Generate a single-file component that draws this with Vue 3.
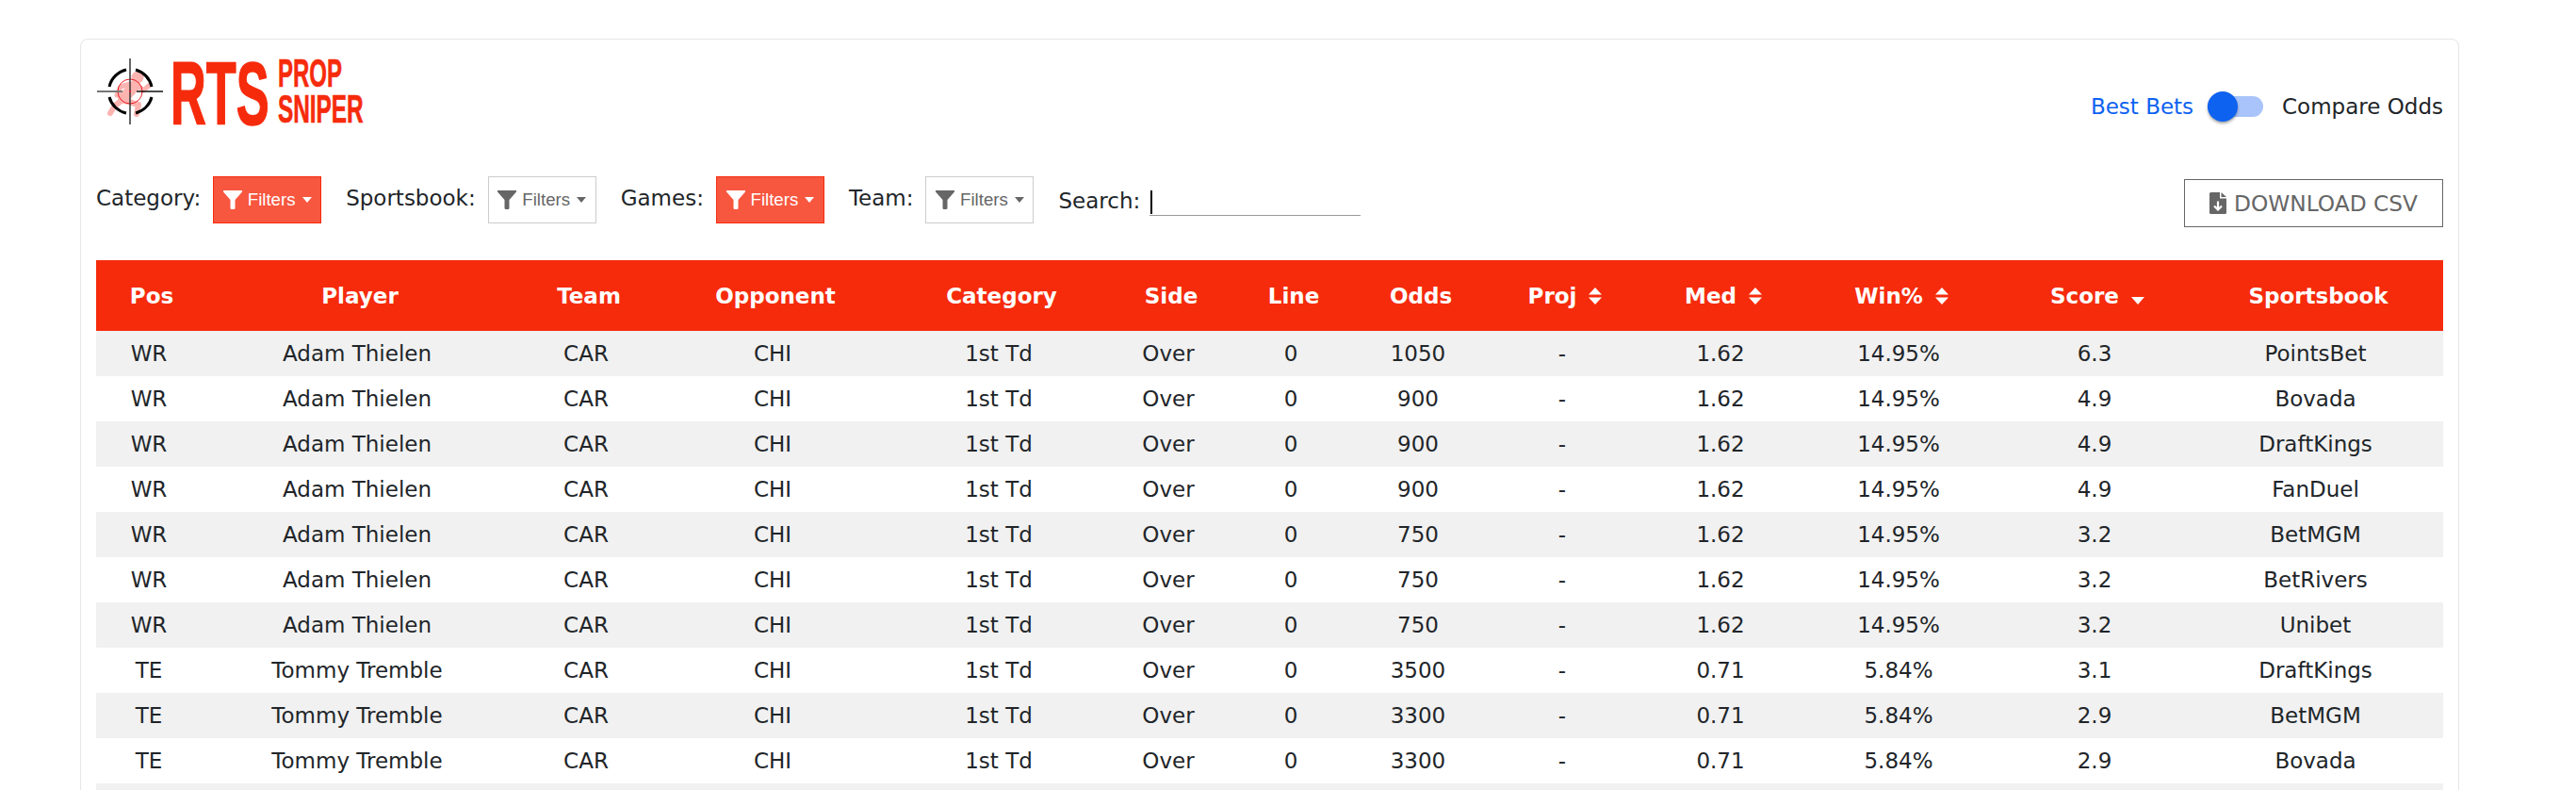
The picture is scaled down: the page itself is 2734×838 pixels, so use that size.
<script setup>
const columns = [
  { label: 'Pos', width: 112 },
  { label: 'Player', width: 330 },
  { label: 'Team', width: 156 },
  { label: 'Opponent', width: 240 },
  { label: 'Category', width: 240 },
  { label: 'Side', width: 120 },
  { label: 'Line', width: 140 },
  { label: 'Odds', width: 130 },
  { label: 'Proj', width: 176, sort: 'both' },
  { label: 'Med', width: 160, sort: 'both' },
  { label: 'Win%', width: 218, sort: 'both' },
  { label: 'Score', width: 198, sort: 'down' },
  { label: 'Sportsbook', width: 271 },
]
const adam = ['WR', 'Adam Thielen', '1.62', '14.95%']
const tommy = ['TE', 'Tommy Tremble', '0.71', '5.84%']
const row = (p, odds, score, book) => [p[0], p[1], 'CAR', 'CHI', '1st Td', 'Over', '0', odds, '-', p[2], p[3], score, book]
const rows = [
  row(adam, '1050', '6.3', 'PointsBet'),
  row(adam, '900', '4.9', 'Bovada'),
  row(adam, '900', '4.9', 'DraftKings'),
  row(adam, '900', '4.9', 'FanDuel'),
  row(adam, '750', '3.2', 'BetMGM'),
  row(adam, '750', '3.2', 'BetRivers'),
  row(adam, '750', '3.2', 'Unibet'),
  row(tommy, '3500', '3.1', 'DraftKings'),
  row(tommy, '3300', '2.9', 'BetMGM'),
  row(tommy, '3300', '2.9', 'Bovada'),
  row(tommy, '3300', '2.9', 'FanDuel'),
]
const filters = [
  { label: 'Category:', active: true },
  { label: 'Sportsbook:', active: false },
  { label: 'Games:', active: true },
  { label: 'Team:', active: false },
]
</script>

<template>
  <div class="page">
    <section class="card">
      <header class="top">
        <div class="logo">
          <svg class="reticle" width="72" height="76" viewBox="0 1 72 76" aria-hidden="true">
            <g fill="none" stroke="#fbb4b0" stroke-linecap="round" stroke-linejoin="round">
              <circle cx="44" cy="23" r="6.5" fill="#fbb4b0" stroke="none" />
              <path d="M41 32 L29 45" stroke-width="12" />
              <path d="M28 47 L20 53 L15 61" stroke-width="6" />
              <path d="M31 48 L45 52 L43 62" stroke-width="6" />
              <path d="M44 31 L50 37 L57 31" stroke-width="5" />
              <path d="M36 30 L26 33 L22 42" stroke-width="5" />
            </g>
            <g fill="none" stroke="#000" stroke-width="3">
              <path d="M14 33 A24 24 0 0 1 32 15" />
              <path d="M42 15 A24 24 0 0 1 59 33" />
              <path d="M59 44 A24 24 0 0 1 42 61" />
              <path d="M32 61 A24 24 0 0 1 14 44" />
            </g>
            <circle cx="36" cy="38" r="13" fill="none" stroke="#ee1c25" stroke-width="1" />
            <path d="M36 3 V73" stroke="#333" stroke-width="1.5" />
            <path d="M1 38 H28" stroke="#777" stroke-width="2" />
            <path d="M43 38 H71" stroke="#111" stroke-width="1.5" />
            <circle cx="36" cy="38" r="1" fill="#ee1c25" />
          </svg>
          <div class="rts"><span>RTS</span></div>
          <div class="word-stack">
            <div class="word"><span class="prop">PROP</span></div>
            <div class="word"><span class="sniper">SNIPER</span></div>
          </div>
        </div>
        <div class="toggle-group">
          <span class="best">Best Bets</span>
          <span class="switch"><span class="thumb"></span></span>
          <span class="compare">Compare Odds</span>
        </div>
      </header>

      <div class="toolbar">
        <div class="filter-list">
          <div v-for="f in filters" :key="f.label" class="filter">
            <span class="filter-label">{{ f.label }}</span>
            <button type="button" class="filter-btn" :class="{ active: f.active }">
              <svg class="funnel" width="20" height="20" viewBox="0 0 20 20">
                <path d="M0 0 H20 V1.5 L12.5 10 V19 Q12.5 20 11 20 H9 Q7.5 20 7.5 19 V10 L0 1.5 Z" fill="currentColor" />
              </svg>
              <span class="filter-text">Filters</span>
              <span class="caret"></span>
            </button>
          </div>
          <div class="search">
            <span class="search-label">Search:</span>
            <span class="search-input"><span class="cursor"></span></span>
          </div>
        </div>
        <button type="button" class="download">
          <svg width="18" height="23" viewBox="0 0 18 23">
            <path d="M1.5 0 H11 V6.5 H18 V21.5 Q18 23 16.5 23 H1.5 Q0 23 0 21.5 V1.5 Q0 0 1.5 0 Z M12.5 0 L18 5 H12.5 Z" fill="#666" />
            <path d="M9 9.5 V18 M5 14.5 L9 18.5 L13 14.5" fill="none" stroke="#fff" stroke-width="2.2" />
          </svg>
          <span>DOWNLOAD CSV</span>
        </button>
      </div>

      <table class="grid">
        <colgroup>
          <col v-for="c in columns" :key="c.label" :style="{ width: c.width + 'px' }" />
        </colgroup>
        <thead>
          <tr>
            <th v-for="c in columns" :key="c.label">
              {{ c.label }}
              <svg v-if="c.sort === 'both'" class="sort" width="14" height="18" viewBox="0 0 14 18">
                <path d="M7 0 L14 7.5 H0 Z M0 10.5 H14 L7 18 Z" fill="#fff" />
              </svg>
              <svg v-else-if="c.sort === 'down'" class="sort" width="14" height="8" viewBox="0 0 14 8">
                <path d="M0 0 H14 L7 8 Z" fill="#fff" />
              </svg>
            </th>
          </tr>
        </thead>
        <tbody>
          <tr v-for="(r, i) in rows" :key="i">
            <td v-for="(v, j) in r" :key="j">{{ v }}</td>
          </tr>
        </tbody>
      </table>
    </section>
  </div>
</template>

<style>
html, body { margin: 0; overflow: hidden; background: #fff; }
</style>

<style scoped>
.page {
  padding: 41px 124px 0 85px;
  font-family: "DejaVu Sans", Verdana, sans-serif;
  font-size: 23px;
  color: #212529;
}
.card {
  box-sizing: border-box;
  width: 2525px;
  padding: 18px 16px 16px;
  border: 1.5px solid #e6e6e6;
  border-radius: 8px;
}
.top {
  display: flex;
  justify-content: space-between;
  height: 76px;
}
.logo {
  display: flex;
  color: #f62b0c;
  font-family: "Liberation Sans", Arial, sans-serif;
  font-weight: 700;
  white-space: nowrap;
}
.reticle { display: block; flex: none; margin-right: 7px; }
.rts {
  box-sizing: border-box;
  width: 105px;
  height: 76px;
  padding-top: 1px;
  font-size: 95px;
  line-height: 76px;
}
.rts span,
.word span {
  display: inline-block;
  width: 0;
  transform-origin: left center;
}
.rts span { transform: scaleX(0.55); -webkit-text-stroke: 1.6px #f62b0c; }
.word-stack { margin: -1px 0 0 9px; }
.word {
  height: 38px;
  font-size: 42px;
  line-height: 38px;
  -webkit-text-stroke: 0.7px #f62b0c;
}
.prop { transform: scaleX(0.57); }
.sniper { transform: scaleX(0.58); }
.toggle-group {
  display: flex;
  align-items: center;
  height: 32px;
  margin-top: 37px;
}
.best { color: #0d62f0; }
.switch {
  position: relative;
  width: 59px;
  height: 22px;
  margin: 0 20px 0 15px;
  border-radius: 11px;
  background: #a8c4fa;
}
.thumb {
  position: absolute;
  left: 0;
  top: -5px;
  width: 32px;
  height: 32px;
  border-radius: 50%;
  background: #0d62f0;
  box-shadow: 0 2px 3px rgba(0, 0, 0, 0.35);
}
.toolbar {
  display: flex;
  justify-content: space-between;
  align-items: flex-start;
  height: 54px;
  margin-top: 51px;
}
.filter-list { display: flex; align-items: flex-start; }
.filter {
  display: flex;
  align-items: center;
  margin-right: 26px;
}
.filter-label { margin-right: 13px; margin-top: -4px; }
.filter-btn {
  box-sizing: border-box;
  display: flex;
  align-items: center;
  justify-content: center;
  width: 115px;
  height: 50px;
  padding: 0;
  border: 1.5px solid #ccc;
  border-radius: 0;
  background: #fff;
  color: #666;
  font-family: "Liberation Sans", Arial, sans-serif;
  font-size: 18.67px;
}
.filter-btn.active {
  border-color: #f62b0c;
  background: #f7563f;
  color: #fff;
}
.funnel { flex: none; }
.filter-text { margin-left: 6px; }
.caret {
  width: 0;
  height: 0;
  margin-left: 7px;
  border-top: 6.5px solid currentColor;
  border-left: 5.5px solid transparent;
  border-right: 5.5px solid transparent;
}
.search {
  display: flex;
  align-items: center;
  height: 50px;
}
.search-label { margin-top: 2px; }
.search-input {
  display: block;
  box-sizing: border-box;
  width: 224px;
  height: 27px;
  margin: 6px 0 0 10px;
  border-bottom: 1.5px solid #999;
}
.cursor {
  display: block;
  width: 2px;
  height: 25px;
  margin-left: 1px;
  background: #000;
}
.download {
  box-sizing: border-box;
  display: flex;
  align-items: center;
  justify-content: center;
  gap: 8px;
  width: 275px;
  height: 51px;
  margin-top: 3px;
  padding: 0;
  border: 1.5px solid #666;
  border-radius: 0;
  background: #fff;
  color: #666;
  font-family: inherit;
  font-size: 23.3px;
}
.grid {
  table-layout: fixed;
  width: 2491px;
  margin-top: 35px;
  border-collapse: collapse;
}
.grid th {
  height: 75px;
  padding: 0 0 0 6px;
  background: #f62b0c;
  color: #fff;
  font-weight: 700;
  text-align: center;
  vertical-align: middle;
}
.sort { margin-left: 5px; vertical-align: -1px; }
.grid td {
  height: 48px;
  padding: 0;
  text-align: center;
  vertical-align: middle;
}
.grid tbody tr:nth-child(odd) td { background: #f1f1f1; }
</style>
